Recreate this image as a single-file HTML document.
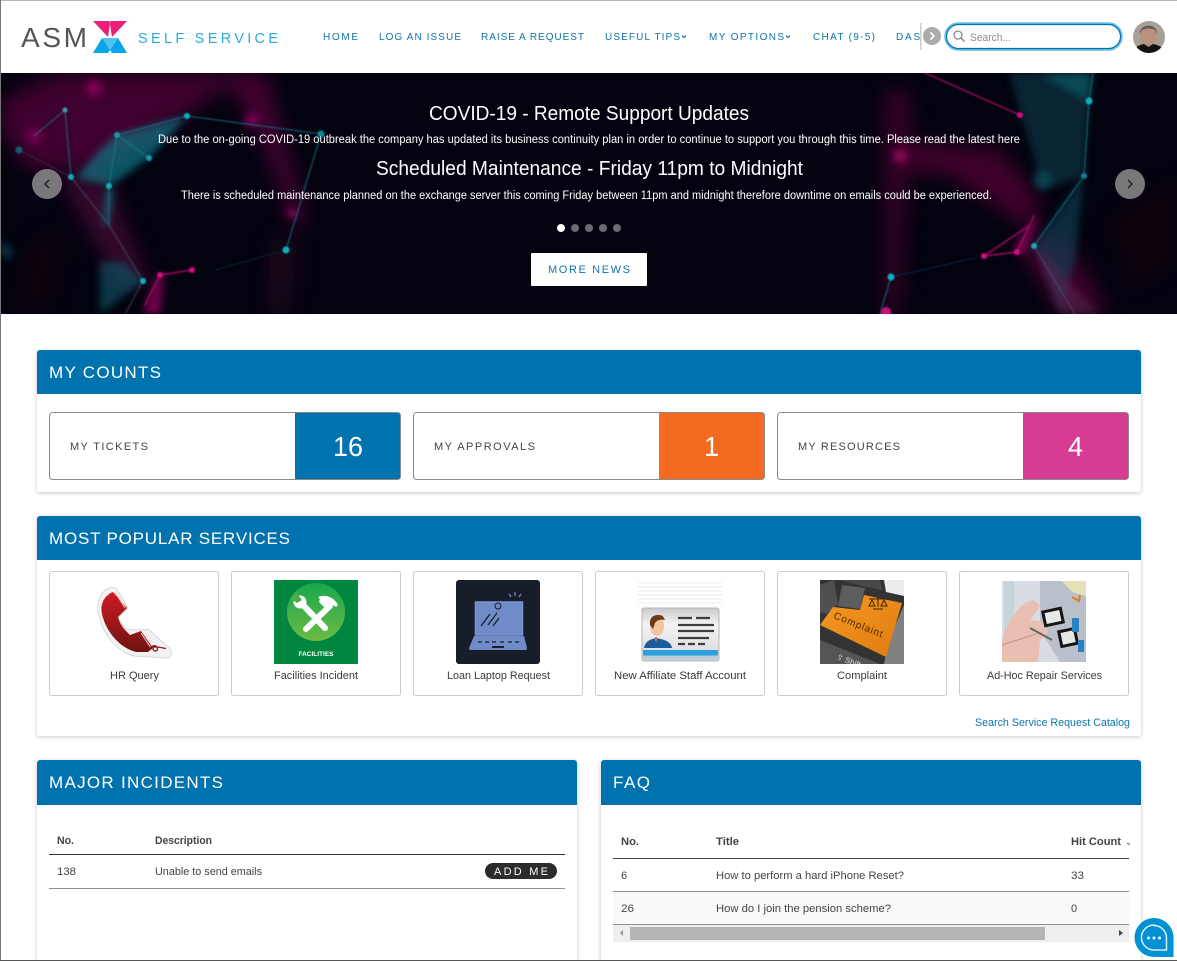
<!DOCTYPE html>
<html lang="en">
<head>
<meta charset="utf-8">
<title>ASMX Self Service</title>
<style>
html,body{margin:0;padding:0;background:#fff;width:1177px;height:961px;overflow:hidden}
svg{display:block;position:absolute;left:0;top:0}
text{font-family:"Liberation Sans",sans-serif}
.nav{font-size:10px;fill:#0f74a8}
.h{font-size:17px;fill:#fff}
.lab{font-size:11px;fill:#444}
.num{font-size:28px;fill:#fff}
.tile{font-size:11px;fill:#3a3a3a}
.td{font-size:11px;fill:#444}
.th{font-size:11px;fill:#444;font-weight:bold}
.ban{fill:#fff}
</style>
</head>
<body>
<svg width="1177" height="961" viewBox="0 0 1177 961" xmlns="http://www.w3.org/2000/svg">
<defs>
<filter id="b1" x="-30%" y="-30%" width="160%" height="160%"><feGaussianBlur stdDeviation=".8"/></filter>
<filter id="b4" x="-30%" y="-30%" width="160%" height="160%"><feGaussianBlur stdDeviation="4"/></filter>
<filter id="b10" x="-40%" y="-40%" width="180%" height="180%"><feGaussianBlur stdDeviation="10"/></filter>
<filter id="sh" x="-3%" y="-3%" width="106%" height="108%"><feDropShadow dx="0" dy="1" stdDeviation="2" flood-color="#000" flood-opacity=".22"/></filter>
<linearGradient id="gg" x1="0" y1="0" x2="0" y2="1"><stop offset="0" stop-color="#17a84e"/><stop offset="1" stop-color="#6dbb45"/></linearGradient>
<linearGradient id="red" x1="0" y1="0" x2="0" y2="1"><stop offset="0" stop-color="#d01c24"/><stop offset="1" stop-color="#6e1212"/></linearGradient>
<linearGradient id="or" x1="0" y1="0" x2="1" y2="1"><stop offset="0" stop-color="#f59a22"/><stop offset="1" stop-color="#e07a10"/></linearGradient>
<linearGradient id="cd" x1="0" y1="0" x2="0" y2="1"><stop offset="0" stop-color="#c9c9c9"/><stop offset=".3" stop-color="#f3f3f3"/><stop offset="1" stop-color="#d8d8d8"/></linearGradient>
<clipPath id="bc"><rect x="0" y="73" width="1177" height="241"/></clipPath>
<clipPath id="navc"><rect x="320" y="20" width="600" height="30"/></clipPath>
<clipPath id="av"><circle cx="1149" cy="37" r="16"/></clipPath>
<clipPath id="cp"><rect x="820" y="580" width="84" height="84"/></clipPath>
<clipPath id="ad"><rect x="1002" y="581" width="84" height="81"/></clipPath>
</defs>

<!-- header -->
<rect width="1177" height="73" fill="#fff"/>
<text x="21" y="47" font-size="28" fill="#555" textLength="66" lengthAdjust="spacing">ASM</text>
<polygon points="93,21 109.500,21 110,24 108,37" fill="#ea1e79"/>
<polygon points="127,21 110.500,21 110,24 112,37" fill="#ea1e79"/>
<polygon points="102,38 118,38 110,50" fill="#4cc3f1"/>
<polygon points="93,53 102,38 110,50 108,53" fill="#06a5ea"/>
<polygon points="127,53 118,38 110,50 112,53" fill="#06a5ea"/>
<text x="138" y="43" font-size="14.500" fill="#29abe2" textLength="140">SELF SERVICE</text>
<g clip-path="url(#navc)">
<text class="nav" x="323" y="40" textLength="35">HOME</text>
<text class="nav" x="379" y="40" textLength="82">LOG AN ISSUE</text>
<text class="nav" x="481" y="40" textLength="103">RAISE A REQUEST</text>
<text class="nav" x="605" y="40" textLength="75">USEFUL TIPS</text>
<text class="nav" x="709" y="40" textLength="75">MY OPTIONS</text>
<text class="nav" x="813" y="40" textLength="62">CHAT (9-5)</text>
<text class="nav" x="896" y="40" textLength="78">DASHBOARD</text>
</g>
<path d="M682 35.500l2 2 2-2M786 35.500l2 2 2-2" fill="none" stroke="#0f74a8" stroke-width="1.200"/>
<rect x="920" y="23" width="1.500" height="27" fill="#ccc"/>
<circle cx="932" cy="36" r="9" fill="#ababab"/>
<path d="M930.500 32.500l3.500 3.500-3.500 3.500" fill="none" stroke="#fff" stroke-width="1.800"/>
<rect x="945.500" y="23.500" width="176" height="26" rx="13" fill="#fff" stroke="#65bfe8" stroke-width="2.500"/>
<rect x="946.500" y="24.500" width="174" height="24" rx="12" fill="#fff" stroke="#0073ae" stroke-width="1.200"/>
<circle cx="958" cy="35" r="4" fill="none" stroke="#8a8a8a" stroke-width="1.300"/>
<path d="M961 38l3.500 3.500" stroke="#8a8a8a" stroke-width="1.500"/>
<text x="970" y="41" font-size="11" fill="#8f8f8f" textLength="41" lengthAdjust="spacingAndGlyphs">Search...</text>
<g clip-path="url(#av)">
<rect x="1133" y="21" width="32" height="32" fill="#a89f97"/>
<ellipse cx="1148.500" cy="36" rx="8" ry="10" fill="#b8927c"/>
<path d="M1140 34c-1-11 18-11 17 0l-2-4c-4-2-9-2-13 0z" fill="#5e5a56"/>
<path d="M1133 53c1-6 6-8 11-9l4.500 3 4.500-3c5 1 11 3 12 9z" fill="#15110f"/>
</g>

<!-- banner -->
<rect x="0" y="73" width="1177" height="241" fill="#03030f"/>
<g clip-path="url(#bc)">
<g filter="url(#b10)" opacity=".5">
<polygon points="60,73 250,73 100,170 30,170 0,130 0,100" fill="#7c0450"/>
<polygon points="225,73 265,73 305,215 298,235 262,140" fill="#8a0458"/>
<polygon points="270,240 298,240 290,314 268,314" fill="#4a0a30" opacity=".7"/>
<polygon points="60,180 105,175 150,285 120,285" fill="#6a0a48"/>
<polygon points="885,90 910,90 900,314 885,314" fill="#6c0342"/>
<polygon points="890,140 1000,150 1040,200 1030,230 950,175 890,170" fill="#7c0448"/>
<polygon points="1020,250 1060,230 1110,314 1060,314" fill="#7c0448"/>
<polygon points="30,240 70,230 45,314 15,314" fill="#2a0508" opacity=".5"/>
<polygon points="1110,220 1177,180 1177,260 1130,290" fill="#3a0610" opacity=".4"/>
</g>
<g filter="url(#b4)" opacity=".7">
<circle cx="94" cy="88" r="8" fill="#a0056a"/>
<circle cx="34" cy="136" r="8" fill="#8a0558"/>
<circle cx="252" cy="120" r="7" fill="#a0056a"/>
<circle cx="292" cy="213" r="5" fill="#b00870"/>
<circle cx="900" cy="156" r="7" fill="#b00870"/>
<polygon points="1030,225 1040,215 1025,255 1012,250" fill="#a00565"/>
<polygon points="155,280 165,272 160,314 143,314" fill="#a00565"/>
</g>
<g filter="url(#b4)" opacity=".6">
<polygon points="117,135 187,116 149,158 112,185 76,178 100,150" fill="#0b8a96"/>
<polygon points="105,190 115,190 108,225 102,225" fill="#0b7c88"/>
<polygon points="100,262 125,262 143,281 100,314" fill="#0a5a6a"/>
<polygon points="1009,73 1092,73 1089,101 1084,176 1043,190" fill="#073a4c"/>
<polygon points="1084,176 1034,246 1060,314 1075,260" fill="#0a4458"/>
<circle cx="1043" cy="180" r="9" fill="#0c6e7c"/>
<polygon points="1040,73 1092,73 1089,101" fill="#0e7c84"/>
<polygon points="1034,246 1100,314 1060,314" fill="#6a3a6a" opacity=".6"/>
<polygon points="0,240 14,250 10,260 0,255" fill="#0a4a60"/>
</g>
<g filter="url(#b1)" fill="none" stroke-linecap="round" opacity=".8">
<path d="M187 116L321 134L286 250M65 110L71 177M65 110L34 136M117 135L109 186M117 135L149 158M187 116L117 135" stroke="#1a7f92" stroke-width="1.100"/>
<path d="M109 186V225" stroke="#1a7f92" stroke-width="1.500" opacity=".7"/>
<path d="M109 225L143 281L125 314M71 177L109 225" stroke="#5a6a8a" stroke-width="1.300" opacity=".6"/>
<path d="M19 150L71 177" stroke="#3a2a5a" stroke-width="1"/>
<path d="M286 250L215 270" stroke="#0e2a48" stroke-width="1"/>
<path d="M1089 101L1084 176L1034 246M1089 101L1093 73" stroke="#167a8e" stroke-width="1.200"/>
<path d="M891 277L880 314" stroke="#167a8e" stroke-width="1.200"/>
<path d="M891 277L975 258" stroke="#0e2a48" stroke-width="1.200"/>
<path d="M1034 246L1075 314" stroke="#5a6a8a" stroke-width="1.500" opacity=".5"/>
<path d="M925 73L1020 115" stroke="#c00a6e" stroke-width="1.500"/>
<path d="M160 275L192 270M160 275L145 305M984 256L1017 252L1034 216M984 256L1030 225" stroke="#a00860" stroke-width="2"/>
</g>
<g fill="#0fb1bd" filter="url(#b1)">
<circle cx="187" cy="116" r="3"/><circle cx="321" cy="134" r="3.500" fill="#0c8b9c"/><circle cx="286" cy="250" r="3.500"/><circle cx="65" cy="110" r="2.500" fill="#3ba0a8"/><circle cx="71" cy="177" r="3"/><circle cx="109" cy="186" r="3"/><circle cx="117" cy="135" r="3" fill="#149aa6"/><circle cx="149" cy="158" r="3" fill="#149aa6"/><circle cx="19" cy="150" r="3.500" fill="#14606e"/><circle cx="143" cy="281" r="3"/>
<circle cx="1089" cy="101" r="3.500"/><circle cx="1084" cy="176" r="3" fill="#14808e"/><circle cx="1034" cy="246" r="3"/><circle cx="891" cy="277" r="3.500"/>
<circle cx="1020" cy="115" r="3" fill="#d00a78"/><circle cx="192" cy="270" r="3" fill="#d00a78"/><circle cx="160" cy="275" r="3" fill="#d00a78"/><circle cx="984" cy="256" r="3" fill="#d00a78"/><circle cx="1017" cy="252" r="3" fill="#d00a78"/><circle cx="886" cy="312" r="5" fill="#d00a78"/>
</g>
</g>
<text class="ban" x="429" y="120" font-size="20" textLength="320" lengthAdjust="spacingAndGlyphs">COVID-19 - Remote Support Updates</text>
<text class="ban" x="158" y="143" font-size="11.500" textLength="862" lengthAdjust="spacingAndGlyphs">Due to the on-going COVID-19 outbreak the company has updated its business continuity plan in order to continue to support you through this time. Please read the latest here</text>
<text class="ban" x="376" y="175" font-size="20" textLength="427" lengthAdjust="spacingAndGlyphs">Scheduled Maintenance - Friday 11pm to Midnight</text>
<text class="ban" x="181" y="199" font-size="11.500" textLength="811" lengthAdjust="spacingAndGlyphs">There is scheduled maintenance planned on the exchange server this coming Friday between 11pm and midnight therefore downtime on emails could be experienced.</text>
<circle cx="47" cy="184" r="15" fill="#8d8d8d" opacity=".85"/>
<path d="M49 180l-4 4 4 4" fill="none" stroke="#222" stroke-width="1.500"/>
<circle cx="1130" cy="184" r="15" fill="#8d8d8d" opacity=".85"/>
<path d="M1128 180l4 4-4 4" fill="none" stroke="#222" stroke-width="1.500"/>
<circle cx="561" cy="228" r="4" fill="#fff"/><circle cx="575" cy="228" r="4" fill="#6a6a70"/><circle cx="589" cy="228" r="4" fill="#6a6a70"/><circle cx="603" cy="228" r="4" fill="#6a6a70"/><circle cx="617" cy="228" r="4" fill="#6a6a70"/>
<rect x="531" y="253" width="116" height="33" rx="1" fill="#fff"/>
<text x="548" y="273" font-size="11" fill="#0f74a8" textLength="82">MORE NEWS</text>

<!-- My counts -->
<g>
<rect x="37" y="350" width="1104" height="142" rx="3" fill="#fff" filter="url(#sh)"/>
<path d="M37 394V353a3 3 0 0 1 3-3H1138a3 3 0 0 1 3 3V394z" fill="#0073ae"/>
<text class="h" x="49" y="378" textLength="112">MY COUNTS</text>
<rect x="49.500" y="412.500" width="351" height="67" rx="3" fill="#fff" stroke="#8a8a8a"/>
<rect x="413.500" y="412.500" width="351" height="67" rx="3" fill="#fff" stroke="#8a8a8a"/>
<rect x="777.500" y="412.500" width="351" height="67" rx="3" fill="#fff" stroke="#8a8a8a"/>
<path d="M295 413H398a2 2 0 0 1 2 2V477a2 2 0 0 1-2 2H295z" fill="#0073ae"/>
<path d="M659 413H762a2 2 0 0 1 2 2V477a2 2 0 0 1-2 2H659z" fill="#f46a21"/>
<path d="M1023 413H1126a2 2 0 0 1 2 2V477a2 2 0 0 1-2 2H1023z" fill="#d63c92"/>
<text class="lab" x="70" y="450" textLength="78">MY TICKETS</text>
<text class="lab" x="434" y="450" textLength="101">MY APPROVALS</text>
<text class="lab" x="798" y="450" textLength="102">MY RESOURCES</text>
<text class="num" x="333" y="456" textLength="30" lengthAdjust="spacingAndGlyphs">16</text>
<text class="num" x="704" y="456" textLength="15" lengthAdjust="spacingAndGlyphs">1</text>
<text class="num" x="1068" y="456" textLength="15" lengthAdjust="spacingAndGlyphs">4</text>
</g>

<!-- Popular services -->
<g>
<rect x="37" y="516" width="1104" height="220" rx="3" fill="#fff" filter="url(#sh)"/>
<path d="M37 560V519a3 3 0 0 1 3-3H1138a3 3 0 0 1 3 3V560z" fill="#0073ae"/>
<text class="h" x="49" y="544" textLength="241">MOST POPULAR SERVICES</text>
<g fill="#fff" stroke="#ccc">
<rect x="49.500" y="571.500" width="169" height="124" rx="2"/>
<rect x="231.500" y="571.500" width="169" height="124" rx="2"/>
<rect x="413.500" y="571.500" width="169" height="124" rx="2"/>
<rect x="595.500" y="571.500" width="169" height="124" rx="2"/>
<rect x="777.500" y="571.500" width="169" height="124" rx="2"/>
<rect x="959.500" y="571.500" width="169" height="124" rx="2"/>
</g>

<!-- phone -->
<path d="M112 587C101 590 97 600 98 610C101 632 116 652 134 656L168 658C173 656 172 649 167 646L148 629L137 630L126 629L118 618L128 608L116 588z" fill="#f2f2f2" stroke="#d8d8d8"/>
<path d="M113 592C103 596 100 606 102 614C106 632 120 648 136 652L148 652L153 648L141 631L130 635C125 630 120 625 118 617L127 608z" fill="url(#red)"/>
<path d="M115 592l10 16M141 633l10 15" stroke="#f0caca" stroke-width="1.100" fill="none"/>
<path d="M148 651c3-5 7-7 9-3.500s-3 5-4 1.500 5-2 13-.5" fill="none" stroke="#8a1414" stroke-width="1.300"/>

<!-- facilities -->
<rect x="274" y="580" width="84" height="84" fill="#00873d"/>
<circle cx="316" cy="612" r="29" fill="url(#gg)"/>
<path d="M330 606L306 629M325 628L304 606" stroke="#fff" stroke-width="6" stroke-linecap="round"/>
<path d="M318 597c8-3 16 0 20 8l-2 2-5-3-5 5-7-7c1-2 1-4-1-5z" fill="#fff"/>
<circle cx="300" cy="602" r="6.500" fill="#fff"/>
<path d="M296 592l6 8-5 3-6-4z" fill="#48b049"/>
<text x="316" y="656" font-size="6.500" font-weight="bold" fill="#fff" text-anchor="middle" textLength="35">FACILITIES</text>

<!-- laptop -->
<rect x="456" y="580" width="84" height="84" rx="3" fill="#171e29"/>
<rect x="475.500" y="602" width="47" height="33" fill="#6f8cc8" stroke="#7a96d2" stroke-width="1.500"/>
<path d="M474 636H524L527 648a2 2 0 0 1-2 2H471a2 2 0 0 1-2-2z" fill="#6f8cc8"/>
<path d="M478 642h4M485 642h4M492 642h4M500 642h4M508 642h4M515 642h4" stroke="#171e29" stroke-width="1.200"/>
<rect x="492" y="646" width="12" height="2" fill="#171e29"/>
<circle cx="498" cy="606" r="3" fill="#6f8cc8" stroke="#171e29"/>
<path d="M490 614l-9 12M497 613l-9 12M499 618l-6 8" stroke="#171e29" stroke-width="1.300"/>
<path d="M511 597l-2-3M515 596v-4M519 597l2-3" stroke="#6f8cc8" stroke-width="1.300"/>

<!-- affiliate -->
<rect x="638" y="580" width="84" height="84" fill="#fff"/>
<path d="M638 583h84M638 587h84M638 591h84M638 595h84M638 599h84M638 603h84" stroke="#efefef" stroke-width="1.200"/>
<rect x="642" y="608" width="77" height="53" rx="2" fill="url(#cd)" stroke="#b5b5b5"/>
<rect x="643" y="650" width="75" height="5.500" fill="#2c9fe0"/>
<rect x="643" y="655.500" width="75" height="4" fill="#b8cdd8"/>
<path d="M644 648c1-7 7-9 12-10 6 1 15 3 16 10z" fill="#1d5d99"/>
<path d="M654 636l2 6 2-6z" fill="#fff"/>
<path d="M655 637l1 5 1-5z" fill="#b82b2b"/>
<ellipse cx="657" cy="626" rx="7" ry="10" fill="#f2c5a0"/>
<path d="M650 625c-1-9 5-10 9-10 4 0 5 3 6 5-4-1-8 0-10 3l-2 6z" fill="#6b3a1a"/>
<path d="M678 618h14M696 618h14M678 625h36M678 631h36M678 638h31M678 644h7M688 644h7M698 644h7" stroke="#3d3d3d" stroke-width="2.200"/>

<!-- complaint -->
<g clip-path="url(#cp)">
<rect x="820" y="580" width="84" height="84" fill="#333"/>
<polygon points="842,585 865,588 860,609 838,606" fill="#5d5d5d"/>
<polygon points="820,585 834,580 838,604 826,614 820,612" fill="#505050"/>
<polygon points="884,580 904,580 904,596 886,592" fill="#ececec"/>
<polygon points="840,580 880,580 882,590 866,587" fill="#484848"/>
<polygon points="889,640 904,605 904,664 884,664" fill="#808080"/>
<polygon points="833,607 860,610 864,595 902,603 886,657 820,625" fill="url(#or)"/>
<polygon points="820,640 880,664 820,664" fill="#555"/>
<text x="833" y="618" font-family="Liberation Mono" font-size="10" fill="#4a2c05" transform="rotate(22 833 618)" textLength="52">Complaint</text>
<path d="M878 597v10M869 599h18M872 600l-3 6h6zM884 600l-3 6h6zM873 609h10" stroke="#3a2405" stroke-width="1" fill="none"/>
<text x="836" y="659" font-size="8" fill="#ddd" transform="rotate(20 836 659)">⇧ Shift</text>
</g>

<!-- adhoc -->
<g clip-path="url(#ad)">
<rect x="1002" y="581" width="84" height="81" fill="#d9dde3"/>
<polygon points="1040,581 1086,581 1086,662 1060,662 1040,630" fill="#b9c0c9"/>
<polygon points="1062,581 1086,581 1086,596 1072,592" fill="#e6e2b8"/>
<rect x="1004" y="581" width="10" height="81" fill="#c7d5da"/>
<path d="M1002 640C1006 625 1020 600 1034 600L1040 606L1030 620L1044 622L1048 632L1040 640L1038 662H1002z" fill="#e9bfb1"/>
<path d="M1002 645L1036 634" stroke="#c58f82" stroke-width="1"/>
<rect x="1044" y="610" width="18" height="14" fill="#e8e8e8" stroke="#151515" stroke-width="3" transform="rotate(-12 1053 617)"/>
<rect x="1060" y="630" width="16" height="15" fill="#e8e8e8" stroke="#151515" stroke-width="3" transform="rotate(-12 1068 637)"/>
<path d="M1072 597l7 4 1-6" stroke="#e07a20" stroke-width="2" fill="none"/>
<rect x="1072" y="618" width="7" height="14" fill="#2b82c2"/>
<rect x="1078" y="640" width="6" height="12" fill="#2b82c2"/>
<path d="M1030 628L1052 640" stroke="#666" stroke-width="2"/>
</g>

<text class="tile" x="110" y="679" textLength="49" lengthAdjust="spacingAndGlyphs">HR Query</text>
<text class="tile" x="274" y="679" textLength="84" lengthAdjust="spacingAndGlyphs">Facilities Incident</text>
<text class="tile" x="447" y="679" textLength="103" lengthAdjust="spacingAndGlyphs">Loan Laptop Request</text>
<text class="tile" x="614" y="679" textLength="132" lengthAdjust="spacingAndGlyphs">New Affiliate Staff Account</text>
<text class="tile" x="837" y="679" textLength="50" lengthAdjust="spacingAndGlyphs">Complaint</text>
<text class="tile" x="987" y="679" textLength="115" lengthAdjust="spacingAndGlyphs">Ad-Hoc Repair Services</text>
<text x="975" y="726" font-size="11" fill="#0f74a8" textLength="155" lengthAdjust="spacingAndGlyphs">Search Service Request Catalog</text>
</g>

<!-- Major incidents -->
<g>
<rect x="37" y="760" width="540" height="210" rx="3" fill="#fff" filter="url(#sh)"/>
<path d="M37 805V763a3 3 0 0 1 3-3H574a3 3 0 0 1 3 3V805z" fill="#0073ae"/>
<text class="h" x="49" y="788" textLength="174">MAJOR INCIDENTS</text>
<text class="th" x="57" y="844" textLength="17" lengthAdjust="spacingAndGlyphs">No.</text>
<text class="th" x="155" y="844" textLength="57" lengthAdjust="spacingAndGlyphs">Description</text>
<rect x="49" y="854" width="516" height="1" fill="#333"/>
<text class="td" x="57" y="875" textLength="19" lengthAdjust="spacingAndGlyphs">138</text>
<text class="td" x="155" y="875" textLength="107" lengthAdjust="spacingAndGlyphs">Unable to send emails</text>
<rect x="49" y="888" width="516" height="1" fill="#8f8f8f"/>
<rect x="485" y="863" width="72" height="16" rx="8" fill="#2c2c2c"/>
<text x="494" y="875" font-size="11" fill="#fff" textLength="54">ADD ME</text>
</g>

<!-- FAQ -->
<g>
<rect x="601" y="760" width="540" height="210" rx="3" fill="#fff" filter="url(#sh)"/>
<path d="M601 805V763a3 3 0 0 1 3-3H1138a3 3 0 0 1 3 3V805z" fill="#0073ae"/>
<text class="h" x="613" y="788" textLength="37">FAQ</text>
<text class="th" x="621" y="845" textLength="18" lengthAdjust="spacingAndGlyphs">No.</text>
<text class="th" x="716" y="845" textLength="23" lengthAdjust="spacingAndGlyphs">Title</text>
<text class="th" x="1071" y="845" textLength="50" lengthAdjust="spacingAndGlyphs">Hit Count</text>
<path d="M1127 843l1.500 1.500 1.500-1.500" fill="none" stroke="#777"/>
<rect x="613" y="858" width="516" height="1" fill="#444"/>
<text class="td" x="621" y="879">6</text>
<text class="td" x="716" y="879" textLength="188" lengthAdjust="spacingAndGlyphs">How to perform a hard iPhone Reset?</text>
<text class="td" x="1071" y="879" textLength="13" lengthAdjust="spacingAndGlyphs">33</text>
<rect x="613" y="892" width="516" height="32" fill="#f9f9f9"/>
<rect x="613" y="891" width="516" height="1" fill="#8f8f8f"/>
<text class="td" x="621" y="912" textLength="13" lengthAdjust="spacingAndGlyphs">26</text>
<text class="td" x="716" y="912" textLength="175" lengthAdjust="spacingAndGlyphs">How do I join the pension scheme?</text>
<text class="td" x="1071" y="912">0</text>
<rect x="613" y="924" width="516" height="1" fill="#8f8f8f"/>
<rect x="613" y="925" width="516" height="17" fill="#eee"/>
<rect x="630" y="927" width="415" height="13" fill="#b5b5b5"/>
<path d="M623 930v6l-3-3z" fill="#999"/>
<path d="M1119 930v6l4-3z" fill="#444"/>
</g>

<!-- chat -->
<path d="M1154 918a19.500 19.500 0 0 1 19.500 19.500V957H1154a19.500 19.500 0 0 1 0-39z" fill="#0090d4"/>
<path d="M1154 925.500a12.500 12.500 0 0 1 12.500 12.500V950H1154a12.500 12.500 0 0 1 0-25z" fill="#0090d4" stroke="#fff" stroke-width="1.500" stroke-opacity=".85"/>
<circle cx="1148.500" cy="938" r="1.500" fill="#fff"/><circle cx="1154" cy="938" r="1.500" fill="#fff"/><circle cx="1159.500" cy="938" r="1.500" fill="#fff"/>

<!-- window frame -->
<rect x="0" y="0" width="1177" height="1" fill="#b5b5b5"/>
<rect x="0" y="0" width="1" height="961" fill="#777"/>
<rect x="0" y="960" width="1177" height="1" fill="#555"/>
</svg>
</body>
</html>
